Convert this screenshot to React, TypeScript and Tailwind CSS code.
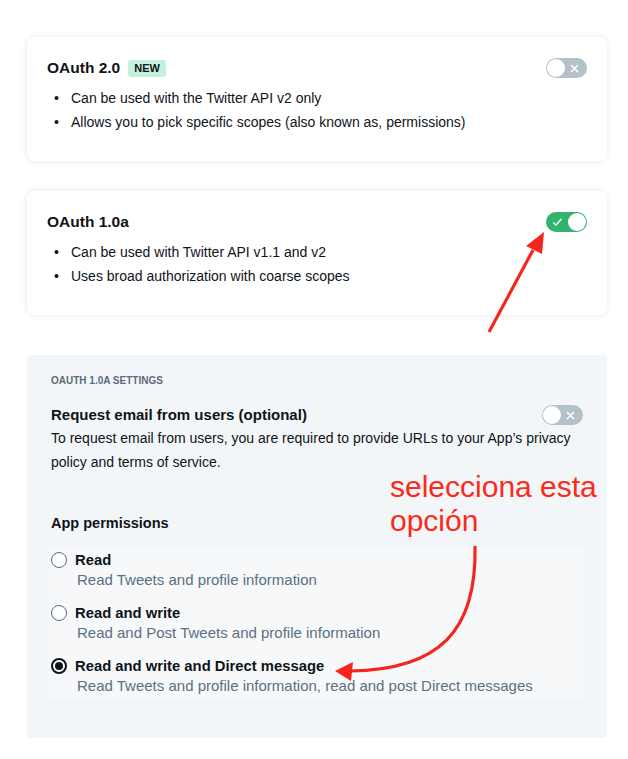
import type { ReactNode } from "react";

const FONT = "font-['Liberation_Sans',Arial,sans-serif]";

function Toggle({ on }: { on: boolean }) {
  if (on) {
    return (
      <div className="flex h-5 w-[41px] items-center justify-between rounded-full bg-[#33b36f] pl-[6px] pr-[1px]">
        <svg width="11" height="10" viewBox="0 0 11 10" fill="none">
          <path d="M1.2 5.4 L4 8 L9.6 1.8" stroke="white" strokeWidth="1.3" />
        </svg>
        <div className="h-[18px] w-[18px] rounded-full bg-white" />
      </div>
    );
  }
  return (
    <div className="flex h-5 w-[41px] items-center justify-between rounded-full bg-[#b3c1c8] pl-[1px] pr-[8px]">
      <div className="h-[18px] w-[18px] rounded-full bg-white" />
      <svg width="9" height="9" viewBox="0 0 9 9" fill="none">
        <path d="M1 1 L8 8 M8 1 L1 8" stroke="white" strokeWidth="1.5" />
      </svg>
    </div>
  );
}

function Bullet({ children }: { children: ReactNode }) {
  return (
    <li className="flex text-[14px] leading-6 text-[#0f1419]">
      <span className="w-[24px] pl-[7px]">•</span>
      <span>{children}</span>
    </li>
  );
}

function AuthCard({
  title,
  badge,
  on,
  points,
}: {
  title: string;
  badge?: string;
  on: boolean;
  points: string[];
}) {
  return (
    <div className="h-[124px] rounded-lg bg-white px-5 pt-5 shadow-[0_0_6px_rgba(20,30,40,0.10)]">
      <div className="flex items-center justify-between">
        <div className="flex items-center gap-2">
          <h3 className="text-[15.5px] font-bold leading-[22px] text-[#0f1419]">{title}</h3>
          {badge && (
            <span className="rounded-[3px] bg-[#c4f0dc] px-[6px] text-[11px] font-bold leading-[17px] text-[#0f1419]">
              {badge}
            </span>
          )}
        </div>
        <Toggle on={on} />
      </div>
      <ul className="mt-[7px]">
        {points.map((p) => (
          <Bullet key={p}>{p}</Bullet>
        ))}
      </ul>
    </div>
  );
}

function Radio({
  checked,
  label,
  desc,
}: {
  checked?: boolean;
  label: string;
  desc: string;
}) {
  return (
    <div>
      <div className="flex items-center gap-2">
        {checked ? (
          <span className="flex h-4 w-4 items-center justify-center rounded-full border-2 border-[#0f1419] bg-white">
            <span className="h-[8px] w-[8px] rounded-full bg-[#0f1419]" />
          </span>
        ) : (
          <span className="h-4 w-4 rounded-full border border-[#5b6b78] bg-white" />
        )}
        <span className="text-[14.8px] font-bold leading-5 text-[#0f1419]">{label}</span>
      </div>
      <p className="pl-[26px] text-[15px] leading-5 text-[#5b7083]">{desc}</p>
    </div>
  );
}

export default function App() {
  return (
    <div className={`relative h-[759px] w-[628px] overflow-hidden bg-white ${FONT}`}>
      <div className="flex flex-col pl-[27px] pr-[21px] pt-[37px]">
        <AuthCard
          title="OAuth 2.0"
          badge="NEW"
          on={false}
          points={[
            "Can be used with the Twitter API v2 only",
            "Allows you to pick specific scopes (also known as, permissions)",
          ]}
        />
        <div className="mt-[30px]">
          <AuthCard
            title="OAuth 1.0a"
            on={true}
            points={["Can be used with Twitter API v1.1 and v2", "Uses broad authorization with coarse scopes"]}
          />
        </div>

        <section className="mt-[40px] h-[383px] rounded-[4px] bg-[#f3f6f8] px-6 pt-[19px]">
          <p className="text-[10px] font-bold leading-[14px] text-[#5b6b78]">OAUTH 1.0A SETTINGS</p>
          <div className="mt-[16px] flex items-center justify-between">
            <h4 className="text-[15px] font-bold leading-[22px] text-[#0f1419]">
              Request email from users (optional)
            </h4>
            <Toggle on={false} />
          </div>
          <p className="text-[14px] leading-6 text-[#0f1419]">
            To request email from users, you are required to provide URLs to your App’s privacy policy and terms of
            service.
          </p>

          <h4 className="mt-[39px] text-[14.5px] font-bold leading-5 text-[#0f1419]">App permissions</h4>
          <div className="-ml-[3px] mt-[15px] flex flex-col gap-[13px] bg-[#f6f8fa] py-[2px] pl-[3px]">
            <Radio label="Read" desc="Read Tweets and profile information" />
            <Radio label="Read and write" desc="Read and Post Tweets and profile information" />
            <Radio
              checked
              label="Read and write and Direct message"
              desc="Read Tweets and profile information, read and post Direct messages"
            />
          </div>
        </section>
      </div>

      {/* annotation overlay */}
      <p className="absolute left-[390px] top-[470px] text-[30px] leading-[34px] text-[#fb2a1c]">
        selecciona esta
        <br />
        opción
      </p>
      <svg className="pointer-events-none absolute left-0 top-0" width="628" height="759" viewBox="0 0 628 759">
        <path d="M489 332 L533 250" stroke="#f5271c" strokeWidth="3.2" fill="none" />
        <path d="M544 232 L526 246 L542 254 Z" fill="#f5271c" />
        <path d="M475 546 C477 630 440 670 350 671" stroke="#f5271c" strokeWidth="3.2" fill="none" />
        <path d="M335 671 L353 662 L351 681 Z" fill="#f5271c" />
      </svg>
    </div>
  );
}
